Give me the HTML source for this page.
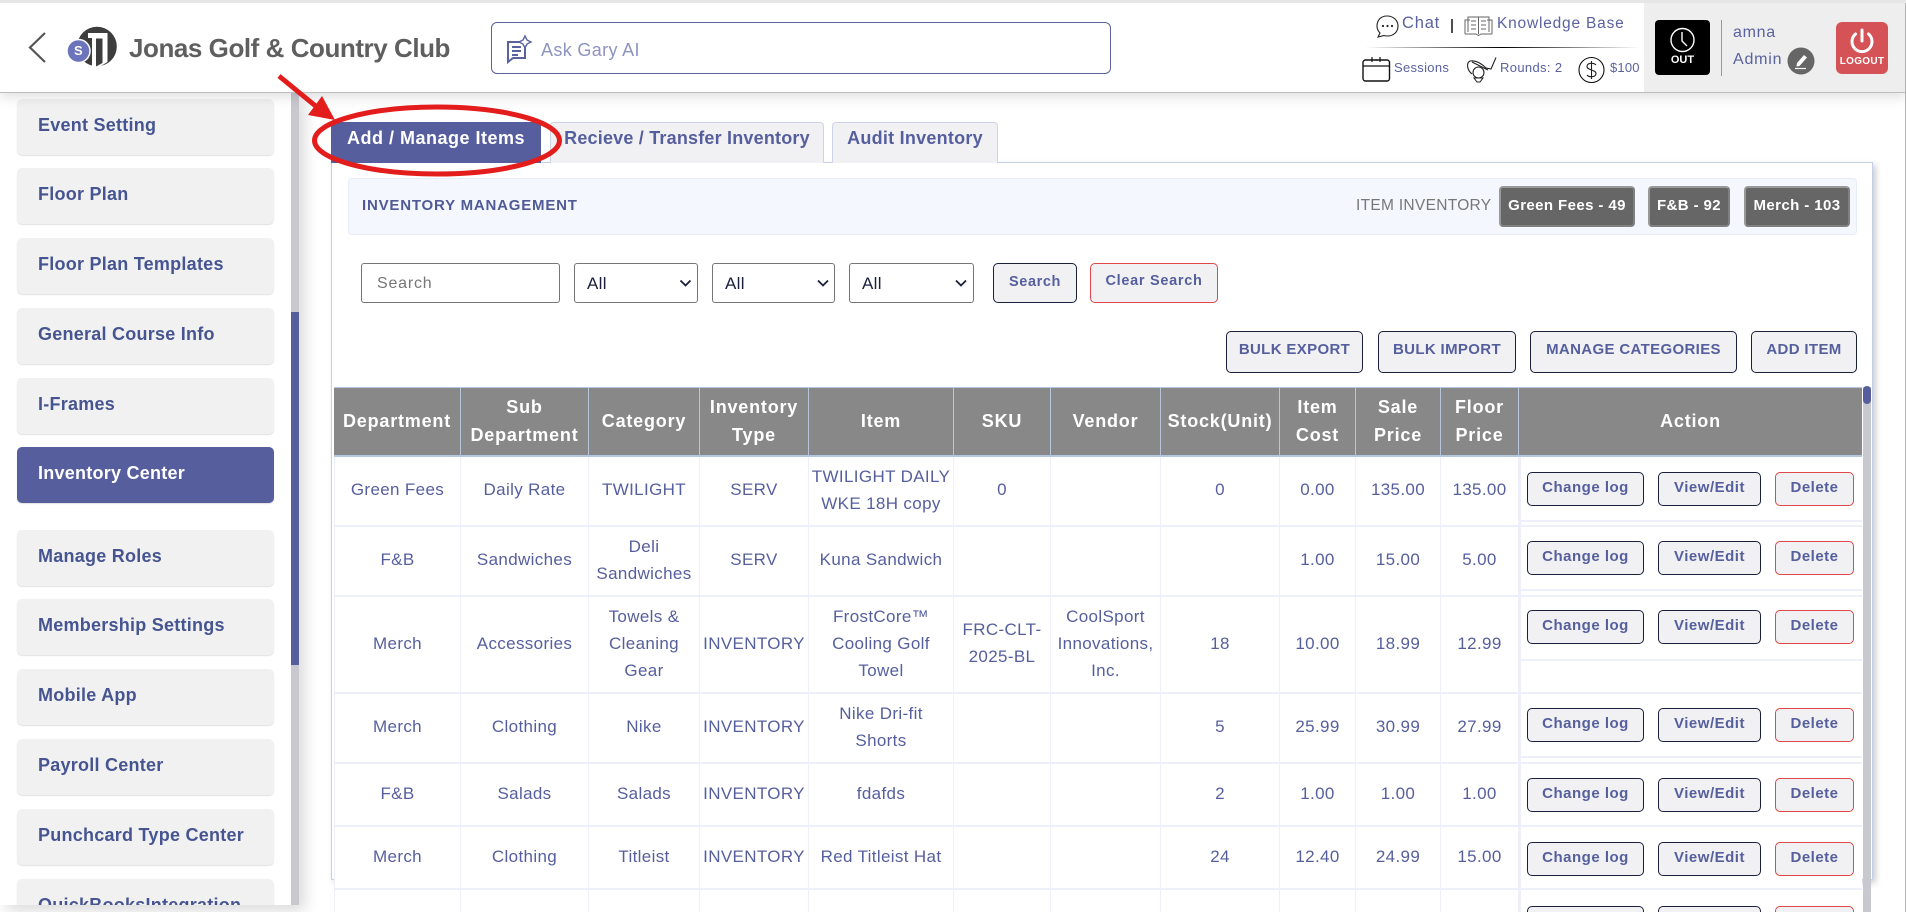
<!DOCTYPE html>
<html><head><meta charset="utf-8"><title>Inventory Center</title>
<style>
*{box-sizing:border-box}
html{margin:0;padding:0;width:1906px;height:912px;overflow:hidden;background:#fff}
body{position:relative;margin:0;padding:0;width:1906px;height:912px;overflow:hidden;background:#fff;font-family:"Liberation Sans",sans-serif;color:#565f9e}
.a{position:absolute}
.t{position:absolute;white-space:nowrap;line-height:1}
#hdr{position:absolute;left:0;top:3px;width:1906px;height:90px;background:#fff;border-bottom:1px solid #bdbdbd;box-shadow:0 4px 12px rgba(0,0,0,.13);z-index:5}
#top{position:absolute;left:0;top:0;width:1906px;height:3px;background:#e6e6e6;z-index:6}
#side{position:absolute;left:0;top:93px;width:299px;height:812px;background:#fff;overflow:hidden;box-shadow:6px 6px 14px rgba(0,0,0,.14);z-index:3}
.mi{position:absolute;left:17px;width:257px;height:56px;background:#f1f1f1;border-radius:5px;box-shadow:0 1px 1px rgba(0,0,0,.12);padding-left:21px;font-size:18px;font-weight:bold;color:#465591;line-height:53px;letter-spacing:.25px;white-space:nowrap}
.mi.on{background:#565e9e;color:#fff}
.tab{position:absolute;top:122px;height:41px;background:#f1f1f4;border:1px solid #ccd4e6;border-bottom:0;border-radius:4px 4px 0 0;text-align:center;font-size:18px;font-weight:bold;line-height:30px;color:#565f9e;letter-spacing:.25px;white-space:nowrap}
#box{position:absolute;left:331px;top:162px;width:1542px;height:718px;background:#fff;border:1px solid #c5cfe5;box-shadow:3px 3px 6px rgba(0,0,0,.2)}
.bdg{position:absolute;top:186px;height:41px;background:#666;border:2px solid #999;border-right-color:#808080;border-bottom-color:#808080;border-radius:4px;color:#fff;font-size:15px;font-weight:bold;text-align:center;line-height:36px;letter-spacing:.4px;white-space:nowrap}
.btn{position:absolute;background:#f1f1f3;border:1px solid #1a1f3c;border-radius:5px;text-align:center;color:#565f9e;font-weight:bold;font-size:15px;white-space:nowrap}
.btn.r{border-color:#e0474a}
input,select{position:absolute;top:263px;height:40px;background:#fff;border:1px solid #767676;border-radius:3px;font-family:"Liberation Sans",sans-serif;color:#1a1f3c}
input{padding:1px 15px 0;letter-spacing:.8px;font-size:16px}
input::placeholder{color:#777}
select{padding-left:12px;font-size:17px;letter-spacing:.3px;appearance:none;-webkit-appearance:none}
#tb{position:absolute;left:334px;top:387px;width:1528px;border-collapse:separate;border-spacing:0;table-layout:fixed;background:#fff}
#tb th{background:#888;color:#fff;font-size:18px;font-weight:bold;line-height:28px;letter-spacing:.8px;height:70px;padding:0 0 2px;border-right:1px solid #b8c6dc;border-top:1px solid #b5c7e0;border-bottom:2px solid #b5c7e0;text-align:center}
#tb td{font-size:17px;line-height:27px;letter-spacing:.35px;text-align:center;padding:0 0 3px;color:#565f9e;border-right:1px solid #edf0fa;border-bottom:2px solid #edf0fa;vertical-align:middle;position:relative}
#tb td:first-child{border-left:1px solid #edf0fa}
#tb td.act{border-left:2px solid #edf0fa;border-right:0;font-size:15px}
.il{position:absolute;left:0;right:0;height:2px;background:#edf0fa}
#tb .btn{height:34px;line-height:29px;letter-spacing:.5px}
.cl{left:6px;width:117px}.ve{left:137px;width:103px}.de{left:254px;width:79px}
.s{letter-spacing:.25px}
</style></head><body>
<div id="top"></div>
<div id="hdr"></div>

<div class="a" style="left:1644px;top:3px;width:261px;height:89px;background:#eee;z-index:6"></div>
<div class="a" style="left:1905px;top:3px;width:1px;height:909px;background:#b3b3b3;z-index:7"></div>

<svg class="a" style="left:0;top:0;z-index:8" width="1906" height="93" viewBox="0 0 1906 93" fill="none">
  <path d="M45 33 L30 47.5 L45 62" stroke="#555" stroke-width="2.2"/>
  <circle cx="97" cy="46.500" r="19.800" fill="#3d3d3d"/>
  <path d="M88 33 H107.500 V62 L100 66.500 H92 V38 H88 Z" fill="#fff"/>
  <path d="M96 38.500 H102.500 V63 L96 66.500 Z" fill="#3d3d3d"/>
  <circle cx="78.500" cy="51" r="11.500" fill="#6c74bb" stroke="#fff" stroke-width="1.500"/>
  <path d="M507 42 H525 V58 H513 L508 62 V42 Z M512 47 H521 M512 51 H521 M512 55 H518" stroke="#5a629f" stroke-width="2"/>
  <path d="M525 36 L527 40 L531 42 L527 44 L525 48 L523 44 L519 42 L523 40 Z" fill="#fff" stroke="#5a629f" stroke-width="1.400"/>
  <path d="M1387 16 C1381 16 1377 20 1377 26 C1377 29 1378 31 1380 33 L1378 37 L1384 35.500 C1385 36 1386 36 1387.500 36 C1393.500 36 1398 32 1398 26 C1398 20 1393 16 1387 16 Z" stroke="#222" stroke-width="1.100"/>
  <circle cx="1383" cy="26" r="1.100" fill="#222"/><circle cx="1387.500" cy="26" r="1.100" fill="#222"/><circle cx="1392" cy="26" r="1.100" fill="#222"/>
  <path d="M1452 19 V33" stroke="#222" stroke-width="1.600"/>
  <path d="M1465 34 V20 H1470 M1492 34 V20 H1487 M1468 32 V17 H1478.500 V34 M1489 32 V17 H1478.500 M1465 34 H1476 L1478.500 35.500 L1481 34 H1492 M1471 21 H1476 M1471 25 H1476 M1471 29 H1476 M1481 21 H1486 M1481 25 H1486 M1481 29 H1486" stroke="#666" stroke-width="1"/>
  <linearGradient id="g" x1="0" x2="1" y1="0" y2="0"><stop offset="0" stop-color="#000" stop-opacity="0"/><stop offset=".5" stop-color="#000"/><stop offset="1" stop-color="#000" stop-opacity="0"/></linearGradient>
  <rect x="1365" y="47" width="275" height="1" fill="url(#g)"/>
  <rect x="1363" y="60" width="26.500" height="21" rx="2.500" stroke="#111" stroke-width="1.400"/>
  <path d="M1363 66 H1389 M1372 57 V62 M1380 57 V62 M1375 60 H1378" stroke="#111" stroke-width="1.200"/>
  <path d="M1496 57.500 L1491 69 L1486 68 C1482 64 1476 60 1470 61 C1466 63 1467 70 1472 74 M1472 62 L1488 70" stroke="#222" stroke-width="1.100"/>
  <circle cx="1478.500" cy="72.500" r="5.500" fill="#fff" stroke="#222" stroke-width="1.100"/>
  <path d="M1474 78 H1483 L1480 82 H1477 Z" stroke="#222" stroke-width="1"/>
  <circle cx="1591.500" cy="70" r="12.500" stroke="#111" stroke-width="1.100"/>
  <path d="M1596 65 C1594 62.500 1587 62.500 1587 66.500 C1587 70.500 1596 69.500 1596 73.500 C1596 77.500 1589 77.500 1587 75 M1591.500 61 V79" stroke="#222" stroke-width="1.100"/>
</svg>

<div class="t" style="left:129px;top:35px;font-size:26px;font-weight:bold;color:#5f5f5f;z-index:8;letter-spacing:-.45px">Jonas Golf &amp; Country Club</div>
<div class="t" style="left:74px;top:44px;font-size:13px;font-weight:bold;color:#fff;z-index:9">S</div>
<div class="a" style="left:491px;top:22px;width:620px;height:52px;border:1px solid #5a629f;border-radius:6px;z-index:6"></div>
<div class="t" style="left:541px;top:41px;font-size:18px;color:#8d94c0;z-index:8;letter-spacing:.35px">Ask Gary AI</div>

<div class="t" style="left:1402px;top:15px;font-size:16.500px;color:#5a629f;z-index:8;letter-spacing:.8px">Chat</div>
<div class="t" style="left:1497px;top:16px;font-size:15.500px;color:#5a629f;z-index:8;letter-spacing:.8px">Knowledge Base</div>
<div class="t" style="left:1394px;top:61px;font-size:13px;color:#5a629f;z-index:8;letter-spacing:.3px">Sessions</div>
<div class="t" style="left:1500px;top:61px;font-size:13px;color:#5a629f;z-index:8;letter-spacing:.35px">Rounds: 2</div>
<div class="t" style="left:1610px;top:61px;font-size:13px;color:#5a629f;z-index:8;letter-spacing:.2px">$100</div>

<div class="a" style="left:1655px;top:20px;width:55px;height:55px;background:#000;border-radius:4px;z-index:8"></div>
<svg class="a" style="left:1655px;top:20px;z-index:9" width="55" height="55" fill="none"><circle cx="27.500" cy="20" r="11.500" stroke="#fff" stroke-width="1.400"/><path d="M27 12 V21 L32 26" stroke="#fff" stroke-width="1.400"/></svg>
<div class="t" style="left:1655px;top:55px;width:55px;text-align:center;font-size:11px;font-weight:bold;color:#fff;z-index:9">OUT</div>
<div class="a" style="left:1721px;top:20px;width:1px;height:56px;background:#999;z-index:8"></div>
<div class="t" style="left:1733px;top:25px;font-size:16px;color:#5a629f;z-index:8;letter-spacing:.7px">amna</div>
<div class="t" style="left:1733px;top:52px;font-size:16px;color:#5a629f;z-index:8;letter-spacing:.8px">Admin</div>
<svg class="a" style="left:1787px;top:47px;z-index:9" width="28" height="28" fill="none"><circle cx="14" cy="14" r="13.500" fill="#666"/><path d="M10 16 L17 8 L20 10.500 L12.500 19 L9.500 19.500 Z" fill="#fff"/><path d="M8 21.500 H19" stroke="#fff" stroke-width="1.200"/></svg>
<div class="a" style="left:1836px;top:22px;width:52px;height:52px;background:#d55256;border-radius:6px;z-index:8"></div>
<svg class="a" style="left:1836px;top:22px;z-index:9" width="52" height="52" fill="none"><path d="M19.500 12 A10 10 0 1 0 32.500 12" stroke="#fff" stroke-width="3" stroke-linecap="round"/><path d="M26 8 V19" stroke="#fff" stroke-width="3" stroke-linecap="round"/></svg>
<div class="t" style="left:1836px;top:57px;width:52px;text-align:center;font-size:10px;font-weight:bold;color:#fff;z-index:9;letter-spacing:.3px">LOGOUT</div>

<div id="side">
  <div class="a" style="left:291px;top:0;width:8px;height:812px;background:#c8c8ce"></div>
  <div class="a" style="left:291px;top:219px;width:8px;height:353px;background:#565e9e"></div>
  <div class="mi" style="top:6px">Event Setting</div>
  <div class="mi" style="top:75px">Floor Plan</div>
  <div class="mi" style="top:145px">Floor Plan Templates</div>
  <div class="mi" style="top:215px">General Course Info</div>
  <div class="mi" style="top:285px">I-Frames</div>
  <div class="mi on" style="top:354px">Inventory Center</div>
  <div class="mi" style="top:437px">Manage Roles</div>
  <div class="mi" style="top:506px">Membership Settings</div>
  <div class="mi" style="top:576px">Mobile App</div>
  <div class="mi" style="top:646px">Payroll Center</div>
  <div class="mi" style="top:716px">Punchcard Type Center</div>
  <div class="mi" style="top:786px">QuickBooksIntegration</div>
</div>

<div id="box"></div>
<div class="tab" style="left:331px;width:210px;background:#565e9e;border-color:#565e9e;color:#fff;z-index:2;letter-spacing:.5px">Add / Manage Items</div>
<div class="tab" style="left:550px;width:274px;letter-spacing:.2px">Recieve / Transfer Inventory</div>
<div class="tab" style="left:832px;width:166px">Audit Inventory</div>

<div class="a" style="left:348px;top:178px;width:1509px;height:57px;background:#f4f7fd;border:1px solid #e6ecf8;border-radius:4px"></div>
<div class="t" style="left:362px;top:198px;font-size:15px;font-weight:bold;color:#4f5a96;letter-spacing:.8px">INVENTORY MANAGEMENT</div>
<div class="t" style="left:1356px;top:198px;font-size:15.500px;color:#777;letter-spacing:.3px">ITEM INVENTORY</div>
<div class="bdg" style="left:1499px;width:136px">Green Fees - 49</div>
<div class="bdg" style="left:1648px;width:82px">F&amp;B - 92</div>
<div class="bdg" style="left:1744px;width:106px">Merch - 103</div>

<input style="left:361px;width:199px" placeholder="Search" type="text">
<select style="left:574px;width:124px"><option>All</option></select>
<select style="left:712px;width:123px"><option>All</option></select>
<select style="left:849px;width:125px"><option>All</option></select>
<svg class="a" style="left:0;top:270px;z-index:2" width="1000" height="24" fill="none" stroke="#1a1f3c" stroke-width="1.800">
  <path d="M680.500 10.500 L685.500 15.500 L690.500 10.500"/>
  <path d="M818 10.500 L823 15.500 L828 10.500"/>
  <path d="M956 10.500 L961 15.500 L966 10.500"/>
</svg>
<div class="btn" style="left:993px;top:263px;width:84px;height:40px;line-height:36px;font-size:14.500px;letter-spacing:.6px">Search</div>
<div class="btn r" style="left:1090px;top:263px;width:128px;height:40px;line-height:35px;font-size:14.500px;letter-spacing:.7px">Clear Search</div>

<div class="btn" style="left:1226px;top:331px;width:137px;height:42px;line-height:35px;letter-spacing:.35px">BULK EXPORT</div>
<div class="btn" style="left:1378px;top:331px;width:138px;height:42px;line-height:35px;letter-spacing:.35px">BULK IMPORT</div>
<div class="btn" style="left:1530px;top:331px;width:207px;height:42px;line-height:35px;letter-spacing:.35px">MANAGE CATEGORIES</div>
<div class="btn" style="left:1751px;top:331px;width:106px;height:42px;line-height:35px;letter-spacing:.35px">ADD ITEM</div>

<table id="tb">
<colgroup><col style="width:127px"><col style="width:128px"><col style="width:111px"><col style="width:109px"><col style="width:145px"><col style="width:97px"><col style="width:110px"><col style="width:119px"><col style="width:76px"><col style="width:85px"><col style="width:78px"><col style="width:343px"></colgroup>
<tr><th>Department</th><th>Sub<br>Department</th><th>Category</th><th class="s">Inventory<br>Type</th><th>Item</th><th>SKU</th><th>Vendor</th><th class="s">Stock(Unit)</th><th>Item<br>Cost</th><th>Sale<br>Price</th><th>Floor<br>Price</th><th style="border-right:0">Action</th></tr>
<tr style="height:70px"><td>Green Fees</td><td>Daily Rate</td><td>TWILIGHT</td><td>SERV</td><td>TWILIGHT DAILY<br>WKE 18H copy</td><td>0</td><td></td><td>0</td><td>0.00</td><td>135.00</td><td>135.00</td><td class="act"><div class="btn cl" style="top:15px">Change log</div><div class="btn ve" style="top:15px">View/Edit</div><div class="btn de r" style="top:15px">Delete</div><div class="il" style="top:63px"></div></td></tr>
<tr style="height:70px"><td>F&amp;B</td><td>Sandwiches</td><td>Deli<br>Sandwiches</td><td>SERV</td><td>Kuna Sandwich</td><td></td><td></td><td></td><td>1.00</td><td>15.00</td><td>5.00</td><td class="act"><div class="btn cl" style="top:14px">Change log</div><div class="btn ve" style="top:14px">View/Edit</div><div class="btn de r" style="top:14px">Delete</div><div class="il" style="top:62px"></div></td></tr>
<tr style="height:97px"><td>Merch</td><td>Accessories</td><td>Towels &amp;<br>Cleaning<br>Gear</td><td>INVENTORY</td><td>FrostCore™<br>Cooling Golf<br>Towel</td><td>FRC-CLT-<br>2025-BL</td><td>CoolSport<br>Innovations,<br>Inc.</td><td>18</td><td>10.00</td><td>18.99</td><td>12.99</td><td class="act"><div class="btn cl" style="top:13px">Change log</div><div class="btn ve" style="top:13px">View/Edit</div><div class="btn de r" style="top:13px">Delete</div><div class="il" style="top:62px"></div></td></tr>
<tr style="height:70px"><td>Merch</td><td>Clothing</td><td>Nike</td><td>INVENTORY</td><td>Nike Dri-fit<br>Shorts</td><td></td><td></td><td>5</td><td>25.99</td><td>30.99</td><td>27.99</td><td class="act"><div class="btn cl" style="top:14px">Change log</div><div class="btn ve" style="top:14px">View/Edit</div><div class="btn de r" style="top:14px">Delete</div><div class="il" style="top:62px"></div></td></tr>
<tr style="height:63px"><td>F&amp;B</td><td>Salads</td><td>Salads</td><td>INVENTORY</td><td>fdafds</td><td></td><td></td><td>2</td><td>1.00</td><td>1.00</td><td>1.00</td><td class="act"><div class="btn cl" style="top:14px">Change log</div><div class="btn ve" style="top:14px">View/Edit</div><div class="btn de r" style="top:14px">Delete</div></td></tr>
<tr style="height:63px"><td>Merch</td><td>Clothing</td><td>Titleist</td><td>INVENTORY</td><td>Red Titleist Hat</td><td></td><td></td><td>24</td><td>12.40</td><td>24.99</td><td>15.00</td><td class="act"><div class="btn cl" style="top:15px">Change log</div><div class="btn ve" style="top:15px">View/Edit</div><div class="btn de r" style="top:15px">Delete</div></td></tr>
<tr style="height:63px"><td></td><td></td><td></td><td></td><td></td><td></td><td></td><td></td><td></td><td></td><td></td><td class="act"><div class="btn cl" style="top:16px"></div><div class="btn ve" style="top:16px"></div><div class="btn de r" style="top:16px"></div></td></tr>
</table>

<div class="a" style="left:1863px;top:387px;width:8px;height:525px;background:#c8c8d0"></div>
<div class="a" style="left:1863px;top:386px;width:8px;height:18px;background:#565e9e;border-radius:4px"></div>

<svg class="a" style="left:0;top:0;z-index:10" width="700" height="200" fill="none">
  <ellipse cx="437" cy="140.500" rx="122.500" ry="33.500" stroke="#e31c1c" stroke-width="5"/>
  <path d="M279 76 L318 108" stroke="#e31c1c" stroke-width="5"/>
  <path d="M335 120 L308 115 L322 96 Z" fill="#e31c1c"/>
</svg>
</body></html>
